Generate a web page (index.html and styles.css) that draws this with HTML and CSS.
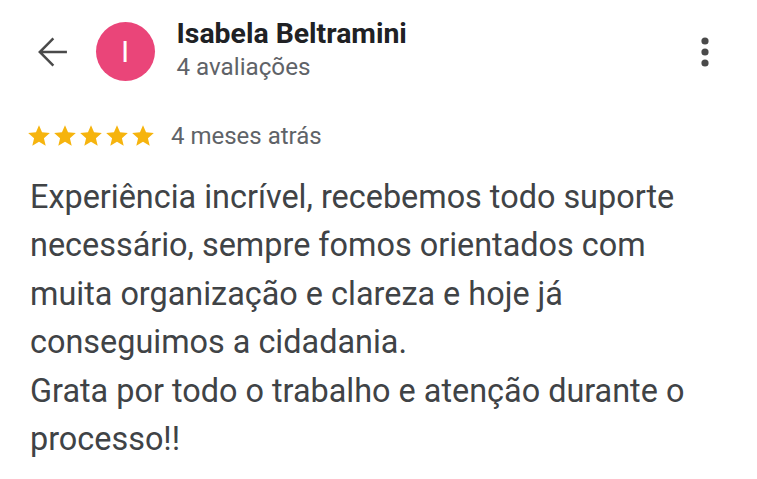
FILE: index.html
```html
<!DOCTYPE html>
<html lang="pt-BR">
<head>
    <meta charset="UTF-8">
    <meta name="viewport" content="width=device-width, initial-scale=1.0">
    <title>Avaliação</title>
    <link rel="stylesheet" href="styles.css">
</head>
<body>
    <div class="review">
        <div class="header">
            <svg class="back" width="44" height="44" viewBox="0 0 24 24">
                <path d="M19.6 12H5 M12.2 4.6L4.8 12l7.4 7.4" fill="none" stroke="#4a4a4a" stroke-width="1.35"/>
            </svg>
            <div class="avatar">I</div>
            <div class="info">
                <div class="name">Isabela Beltramini</div>
                <div class="sub">4 avaliações</div>
            </div>
            <svg class="more" width="30" height="36" viewBox="0 0 30 36">
                <circle cx="15" cy="7" r="3.6" fill="#4a4a4a"/>
                <circle cx="15" cy="18" r="3.6" fill="#4a4a4a"/>
                <circle cx="15" cy="29" r="3.6" fill="#4a4a4a"/>
            </svg>
        </div>

        <div class="rating">
            <div class="stars">
                <svg width="26" height="26" viewBox="0 0 24 24"><polygon points="12,17.27 18.18,21 16.54,13.97 22,9.24 14.81,8.62 12,2 9.19,8.62 2,9.24 7.46,13.97 5.82,21"/></svg>
                <svg width="26" height="26" viewBox="0 0 24 24"><polygon points="12,17.27 18.18,21 16.54,13.97 22,9.24 14.81,8.62 12,2 9.19,8.62 2,9.24 7.46,13.97 5.82,21"/></svg>
                <svg width="26" height="26" viewBox="0 0 24 24"><polygon points="12,17.27 18.18,21 16.54,13.97 22,9.24 14.81,8.62 12,2 9.19,8.62 2,9.24 7.46,13.97 5.82,21"/></svg>
                <svg width="26" height="26" viewBox="0 0 24 24"><polygon points="12,17.27 18.18,21 16.54,13.97 22,9.24 14.81,8.62 12,2 9.19,8.62 2,9.24 7.46,13.97 5.82,21"/></svg>
                <svg width="26" height="26" viewBox="0 0 24 24"><polygon points="12,17.27 18.18,21 16.54,13.97 22,9.24 14.81,8.62 12,2 9.19,8.62 2,9.24 7.46,13.97 5.82,21"/></svg>
            </div>
            <span class="date">4 meses atrás</span>
        </div>

        <p class="text">Experiência incrível, recebemos todo suporte<br>necessário, sempre fomos orientados com<br>muita organização e clareza e hoje já<br>conseguimos a cidadania.<br>Grata por todo o trabalho e atenção durante o<br>processo!!</p>
    </div>
</body>
</html>
```

FILE: styles.css
```css
body {
    margin: 0;
    background-color: #ffffff;
    font-family: Roboto, "Noto Sans", sans-serif;
}

.review {
    padding: 22px 37px 0 0;
}

.header {
    display: flex;
    align-items: flex-start;
}

.back {
    margin: 7.5px 0 0 30.5px;
}

.avatar {
    width: 59px;
    height: 59px;
    margin-left: 21px;
    border-radius: 50%;
    background-color: #ea4579;
    color: #ffffff;
    font-size: 30px;
    line-height: 59px;
    text-align: center;
    flex-shrink: 0;
}

.info {
    margin: -4.9px 0 0 22px;
}

.name {
    font-size: 28.4px;
    font-weight: 700;
    line-height: 33px;
    color: #202124;
}

.sub {
    margin-top: 1.6px;
    font-size: 24.2px;
    line-height: 30px;
    color: #5f6368;
}

.more {
    margin: 12px 0 0 auto;
}

.rating {
    display: flex;
    align-items: center;
    margin: 40px 0 0 26px;
}

.stars {
    display: flex;
}

.stars svg {
    fill: #f6b40e;
}

.date {
    margin-left: 15px;
    font-size: 24px;
    color: #5f6368;
}

.text {
    margin: 22.8px 0 0 30px;
    font-size: 32.4px;
    line-height: 48.6px;
    color: #404346;
}
```
